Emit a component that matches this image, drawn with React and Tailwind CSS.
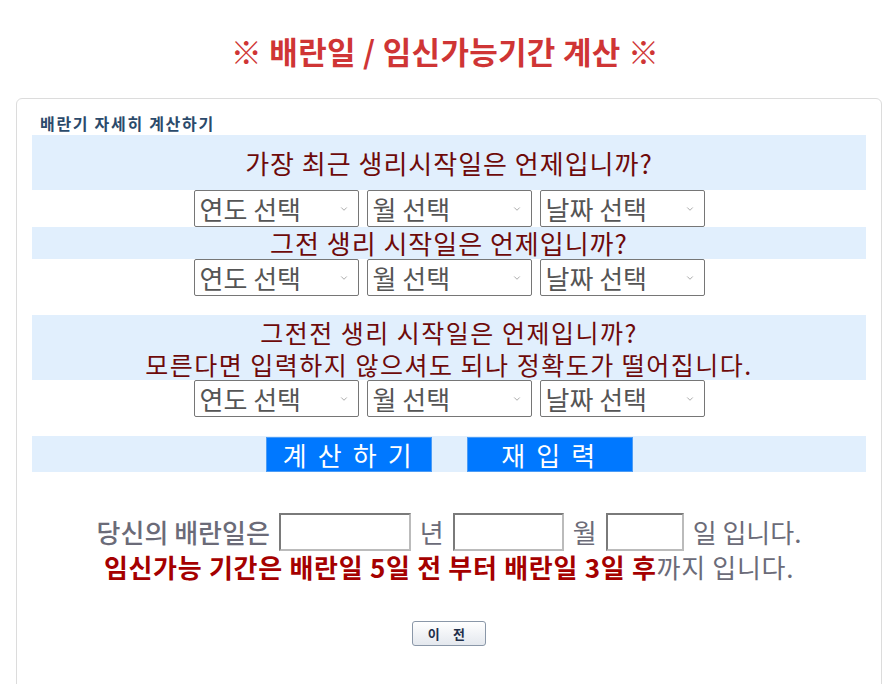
import { ChevronDown } from 'lucide-react';

const font = { fontFamily: '"Noto Sans CJK KR", "Noto Sans", sans-serif' };

const SelectBox = ({ label, width = 'w-[165px]' }) => (
  <div className={`relative ${width} h-[37px]`}>
    <select
      className="w-full h-full appearance-none bg-white border border-[#767676] rounded-[2px] pl-[5px] text-[26px] leading-none text-[#555] outline-none"
      defaultValue=""
    >
      <option value="">{label}</option>
    </select>
    <ChevronDown className="absolute right-[10px] top-[14px] w-[10px] h-[10px] text-[#777] pointer-events-none" strokeWidth={1.5} />
  </div>
);

const SelectRow = () => (
  <div className="flex justify-center gap-[8px] h-[37px]">
    <SelectBox label="연도 선택" />
    <SelectBox label="월 선택" />
    <SelectBox label="날짜 선택" />
  </div>
);

const Question = ({ children, className = '' }) => (
  <div className={`bg-[#e1effd] text-center text-[#6e0a0a] ${className}`}>
    {children}
  </div>
);

export default function App() {
  return (
    <div className="min-h-screen bg-white" style={font}>
      {/* Title */}
      <h1 className="pt-[33px] pb-[29px] text-center text-[31px] leading-[36px] font-bold tracking-[0.3px] text-[#cf3535]">
        ※ 배란일 / 임신가능기간 계산 ※
      </h1>

      {/* Card */}
      <div className="ml-[16px] w-[866px] h-[600px] border border-[#dcdcdc] rounded-[6px] px-[15px] pt-[12px]">
        <div className="h-[24px] pl-[8px] text-[16px] leading-[24px] font-bold tracking-[1.7px] text-[#2b4a6b]">
          배란기 자세히 계산하기
        </div>

        <Question className="h-[55px] text-[26px] tracking-[1px] leading-[55px]">가장 최근 생리시작일은 언제입니까?</Question>
        <SelectRow />
        <Question className="h-[32px] text-[26px] tracking-[1px] leading-[32px]">그전 생리 시작일은 언제입니까?</Question>
        <SelectRow />
        <div className="h-[19px]" />
        <Question className="h-[65px] pt-[1px] text-[25px] tracking-[1.5px] leading-[32px]">
          <p>그전전 생리 시작일은 언제입니까?</p>
          <p>모른다면 입력하지 않으셔도 되나 정확도가 떨어집니다.</p>
        </Question>
        <SelectRow />
        <div className="h-[19px]" />

        <div className="bg-[#e1effd] h-[36px] flex justify-center items-end gap-[35px]">
          <button className="w-[166px] h-[35px] bg-[#0078ff] border border-[#4c9cf5] text-white text-[26px] leading-none tracking-[0.1em]">
            계 산 하 기
          </button>
          <button className="w-[166px] h-[35px] bg-[#0078ff] border border-[#4c9cf5] text-white text-[26px] leading-none tracking-[0.1em]">
            재 입 력
          </button>
        </div>

        {/* Result */}
        <div className="mt-[40px] flex items-center justify-center gap-[9px] text-[26px] text-[#6b6b78]">
          <span className="font-medium">당신의 배란일은</span>
          <input className="w-[132px] h-[38px] border-2 border-[#7a7a7a] border-r-[#bbb] border-b-[#bbb] bg-white" />
          <span>년</span>
          <input className="w-[111px] h-[38px] border-2 border-[#7a7a7a] border-r-[#bbb] border-b-[#bbb] bg-white" />
          <span>월</span>
          <input className="w-[78px] h-[38px] border-2 border-[#7a7a7a] border-r-[#bbb] border-b-[#bbb] bg-white" />
          <span>일 입니다.</span>
        </div>
        <div className="text-center text-[26px] leading-[32px] tracking-[0.7px] text-[#6b6b78]">
          <span className="font-bold text-[#a50000]">임신가능 기간은 배란일 5일 전 부터 배란일 3일 후</span>
          까지 입니다.
        </div>

        <div className="mt-[38px] flex justify-center">
          <button className="w-[74px] h-[25px] rounded-[3px] border border-[#8a97a8] bg-gradient-to-b from-white to-[#e4e8ee] text-[13px] font-bold text-[#1f2f4a] tracking-[0.4em] leading-none">
            이 전
          </button>
        </div>
      </div>
    </div>
  );
}
